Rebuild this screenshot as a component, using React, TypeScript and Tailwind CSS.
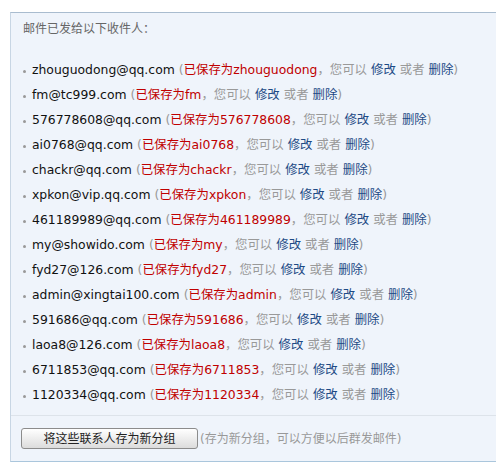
const recipients = [
  ['zhouguodong@qq.com', 'zhouguodong'],
  ['fm@tc999.com', 'fm'],
  ['576778608@qq.com', '576778608'],
  ['ai0768@qq.com', 'ai0768'],
  ['chackr@qq.com', 'chackr'],
  ['xpkon@vip.qq.com', 'xpkon'],
  ['461189989@qq.com', '461189989'],
  ['my@showido.com', 'my'],
  ['fyd27@126.com', 'fyd27'],
  ['admin@xingtai100.com', 'admin'],
  ['591686@qq.com', '591686'],
  ['laoa8@126.com', 'laoa8'],
  ['6711853@qq.com', '6711853'],
  ['1120334@qq.com', '1120334'],
]

export default function App() {
  return (
    <div className="min-h-[473px] bg-white pt-[12px] pl-[10px] font-['DejaVu_Sans','Noto_Sans_CJK_SC',sans-serif] text-[12px] overflow-hidden">
      <div className="border-t border-l border-b border-t-[#a9bccf] border-l-[#c8d6e4] border-b-[#aac6dc] bg-[#eff4fb] w-[600px]">
        <div className="px-[12px] pt-[8px] leading-[16px] text-[#666]">邮件已发给以下收件人：</div>

        <ul className="pl-[12px] mt-[21px] text-[12.4px]">
          {recipients.map(([email, name]) => (
            <li key={email} className="flex items-center h-[25px] whitespace-nowrap">
              <span className="w-[3px] h-[3px] rounded-full bg-[#999] mr-[6px] mt-[2px]" />
              <span className="text-[#111]">{email}</span>
              <span className="text-[#999] ml-[4px]">(</span>
              <span className="text-[#c00000]">已保存为{name}</span>
              <span className="text-[#999]">，您可以 </span>
              <a className="text-[#1d4a85] ml-[4px] cursor-pointer">修改</a>
              <span className="text-[#999] mx-[4px]">或者</span>
              <a className="text-[#1d4a85] cursor-pointer">删除</a>
              <span className="text-[#999]">)</span>
            </li>
          ))}
        </ul>

        <div className="mt-[7px] border-t border-[#dde3ea] flex items-center pl-[10px] pt-[12px] pb-[12px]">
          <button className="w-[177px] h-[21px] rounded-[3px] border border-[#8c8c8c] bg-gradient-to-b from-white to-[#dcdcdc] text-[12px] text-[#222] leading-none">
            将这些联系人存为新分组
          </button>
          <span className="ml-[2px] text-[#999]">(存为新分组，可以方便以后群发邮件)</span>
        </div>
      </div>
    </div>
  )
}
